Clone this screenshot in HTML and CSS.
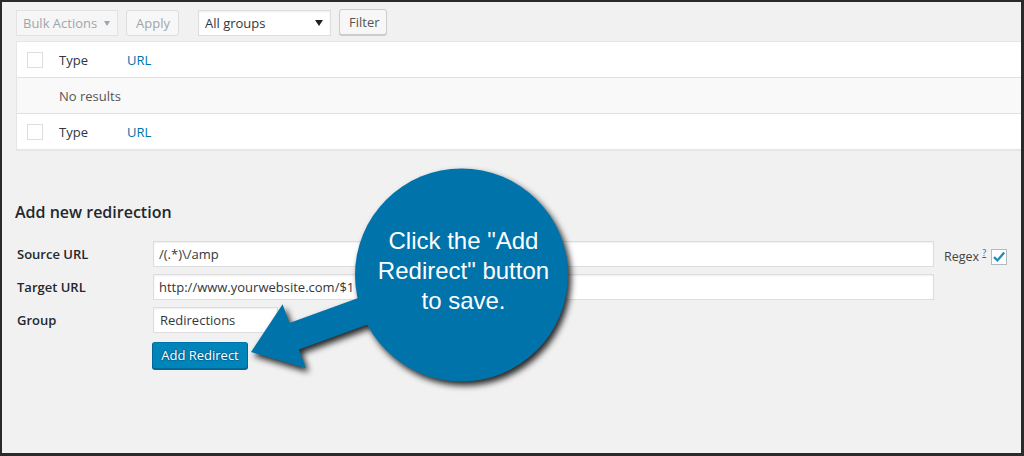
FILE: index.html
```html
<!DOCTYPE html>
<html lang="en">
<head>
<meta charset="UTF-8">
<meta name="viewport" content="width=device-width, initial-scale=1.0">
<title>Redirection</title>
<link rel="stylesheet" href="styles.css">
</head>
<body>
  <div class="frame">
    <div class="page">
      <div class="tablenav">
        <div class="select disabled bulk">Bulk Actions</div>
        <button class="button disabled apply">Apply</button>
        <div class="select groups">All groups</div>
        <button class="button filter">Filter</button>
      </div>

      <div class="list">
        <div class="row">
          <span class="cb"></span>
          <span class="col-type">Type</span>
          <a class="col-url">URL</a>
        </div>
        <div class="row empty">No results</div>
        <div class="row">
          <span class="cb"></span>
          <span class="col-type">Type</span>
          <a class="col-url">URL</a>
        </div>
      </div>

      <h2 class="add-title">Add new redirection</h2>

      <div class="add-form">
        <div class="form-row">
          <label>Source URL</label>
          <input class="input" type="text" value="/(.*)\/amp">
          <span class="regex">Regex <a class="help">?</a></span>
          <span class="cb checked">
            <svg width="14" height="14" viewBox="0 0 14 14"><path d="M2 7.2 L5.4 10.4 L12.2 2.6" fill="none" stroke="#1e8cbe" stroke-width="2.3"/></svg>
          </span>
        </div>
        <div class="form-row">
          <label>Target URL</label>
          <input class="input" type="text" value="http://www.yourwebsite.com/$1">
        </div>
        <div class="form-row">
          <label>Group</label>
          <div class="select group-select">Redirections</div>
        </div>
        <div class="form-row submit-row">
          <button class="button primary">Add Redirect</button>
        </div>
      </div>
    </div>
  </div>

  <div class="callout">
    <svg width="1024" height="456" viewBox="0 0 1024 456">
      <polygon fill="#0073aa" points="251,352 282.6,304.3 289.4,323.1 415.4,277.2 425,303.6 299,349.5 305.8,368.3"/>
      <circle fill="#0073aa" cx="461.5" cy="275" r="106.5"/>
    </svg>
    <div class="bubble-text">Click the "Add<br>Redirect" button<br>to save.</div>
  </div>
</body>
</html>
```

FILE: styles.css
```css
body {
  margin: 0;
  font-family: "Open Sans", sans-serif;
  position: relative;
}
.frame {
  width: 1024px;
  height: 456px;
  box-sizing: border-box;
  border: 2px solid #2a2a2a;
  border-right-width: 3px;
  border-bottom-width: 3px;
  background-color: #f1f1f1;
  overflow: hidden;
}
.page {
  padding: 8px 0 0 14px;
}
.tablenav {
  display: flex;
  align-items: flex-start;
  height: 26px;
}
.select {
  box-sizing: border-box;
  height: 26px;
  display: flex;
  align-items: center;
  justify-content: space-between;
  padding: 0 7px 0 6px;
  border: 1px solid #ddd;
  background-color: #fff;
  box-shadow: inset 0 1px 2px rgba(0, 0, 0, 0.07);
  color: #32373c;
  font-size: 13px;
}
.select::after {
  content: "";
  border-left: 4px solid transparent;
  border-right: 4px solid transparent;
  border-top: 6px solid #222;
}
.select.disabled {
  background-color: #f6f6f6;
  border-color: #e2e2e2;
  color: #a0a5aa;
  box-shadow: none;
}
.select.disabled::after {
  border-left-width: 3px;
  border-right-width: 3px;
  border-top: 5px solid #a0a5aa;
}
.bulk {
  width: 102px;
}
.groups {
  width: 133px;
  margin-left: 19px;
}
.button {
  box-sizing: border-box;
  height: 26px;
  padding: 0 9px;
  border: 1px solid #ccc;
  border-radius: 3px;
  background-color: #f7f7f7;
  box-shadow: 0 1px 0 #ccc;
  color: #555;
  font-family: "Open Sans", sans-serif;
  font-size: 13px;
}
.button.disabled {
  color: #a0a5aa;
  border-color: #ddd;
  box-shadow: none;
}
.apply {
  width: 53px;
  margin-left: 8px;
}
.filter {
  width: 48px;
  margin-left: 8px;
  margin-top: -1px;
}

.list {
  width: 1010px;
  margin-top: 5px;
  background-color: #fff;
  border: 1px solid #e5e5e5;
  box-shadow: 0 1px 1px rgba(0, 0, 0, 0.04);
  font-size: 13px;
  color: #32373c;
}
.row {
  display: flex;
  align-items: center;
  height: 35px;
  border-bottom: 1px solid #e1e1e1;
}
.row:last-child {
  border-bottom: 0;
}
.row.empty {
  background-color: #f9f9f9;
  padding-left: 42px;
  color: #555;
}
.cb {
  box-sizing: border-box;
  width: 16px;
  height: 16px;
  border: 1px solid #dedede;
  background-color: #fff;
}
.row .cb {
  margin: 0 16px 0 10px;
}
.col-type {
  width: 68px;
}
.col-url {
  color: #0073aa;
}

.add-title {
  margin: 51px 0 0 -1px;
  font-size: 16px;
  line-height: 22px;
  font-weight: 600;
  color: #23282d;
}
.add-form {
  margin-top: 18px;
  padding-left: 1px;
}
.form-row {
  display: flex;
  align-items: center;
  height: 26px;
  margin-bottom: 7px;
}
.form-row label {
  width: 136px;
  font-size: 13px;
  font-weight: 600;
  color: #23282d;
}
.input {
  box-sizing: border-box;
  width: 781px;
  height: 26px;
  padding: 0 5px;
  border: 1px solid #ddd;
  box-shadow: inset 0 1px 2px rgba(0, 0, 0, 0.07);
  font-family: "Open Sans", sans-serif;
  font-size: 13px;
  color: #32373c;
  outline: none;
}
.regex {
  margin: 4px 0 0 10px;
  font-size: 12.5px;
  color: #444;
}
.help {
  position: relative;
  top: -5px;
  font-size: 9px;
  color: #0073aa;
  text-decoration: underline;
}
.cb.checked {
  margin: 6px 0 0 5px;
  border-color: #b4b9be;
  display: flex;
  align-items: center;
  justify-content: center;
}
.group-select {
  width: 125px;
}
.group-select::after {
  display: none;
}
.submit-row {
  margin-top: 8px;
  height: 28px;
}
.button.primary {
  height: 27px;
  width: 96px;
  margin-left: 135px;
  padding: 0;
  background-color: #0085ba;
  border-color: #0073aa #006799 #006799;
  box-shadow: 0 1px 0 #006799;
  color: #fff;
  text-shadow: 0 -1px 1px #006799, 1px 0 1px #006799, 0 1px 1px #006799, -1px 0 1px #006799;
}

.callout {
  position: absolute;
  left: 0;
  top: 0;
  width: 1024px;
  height: 456px;
  pointer-events: none;
}
.callout svg {
  position: absolute;
  left: 0;
  top: 0;
  filter: drop-shadow(3px 4px 3px rgba(0, 0, 0, 0.85));
}
.bubble-text {
  position: absolute;
  left: 355px;
  top: 168px;
  width: 213px;
  height: 213px;
  box-sizing: border-box;
  padding: 0 0 8px 4px;
  display: flex;
  align-items: center;
  justify-content: center;
  text-align: center;
  color: #fff;
  font-family: "Liberation Sans", Arial, sans-serif;
  font-size: 24px;
  line-height: 30px;
}
```
